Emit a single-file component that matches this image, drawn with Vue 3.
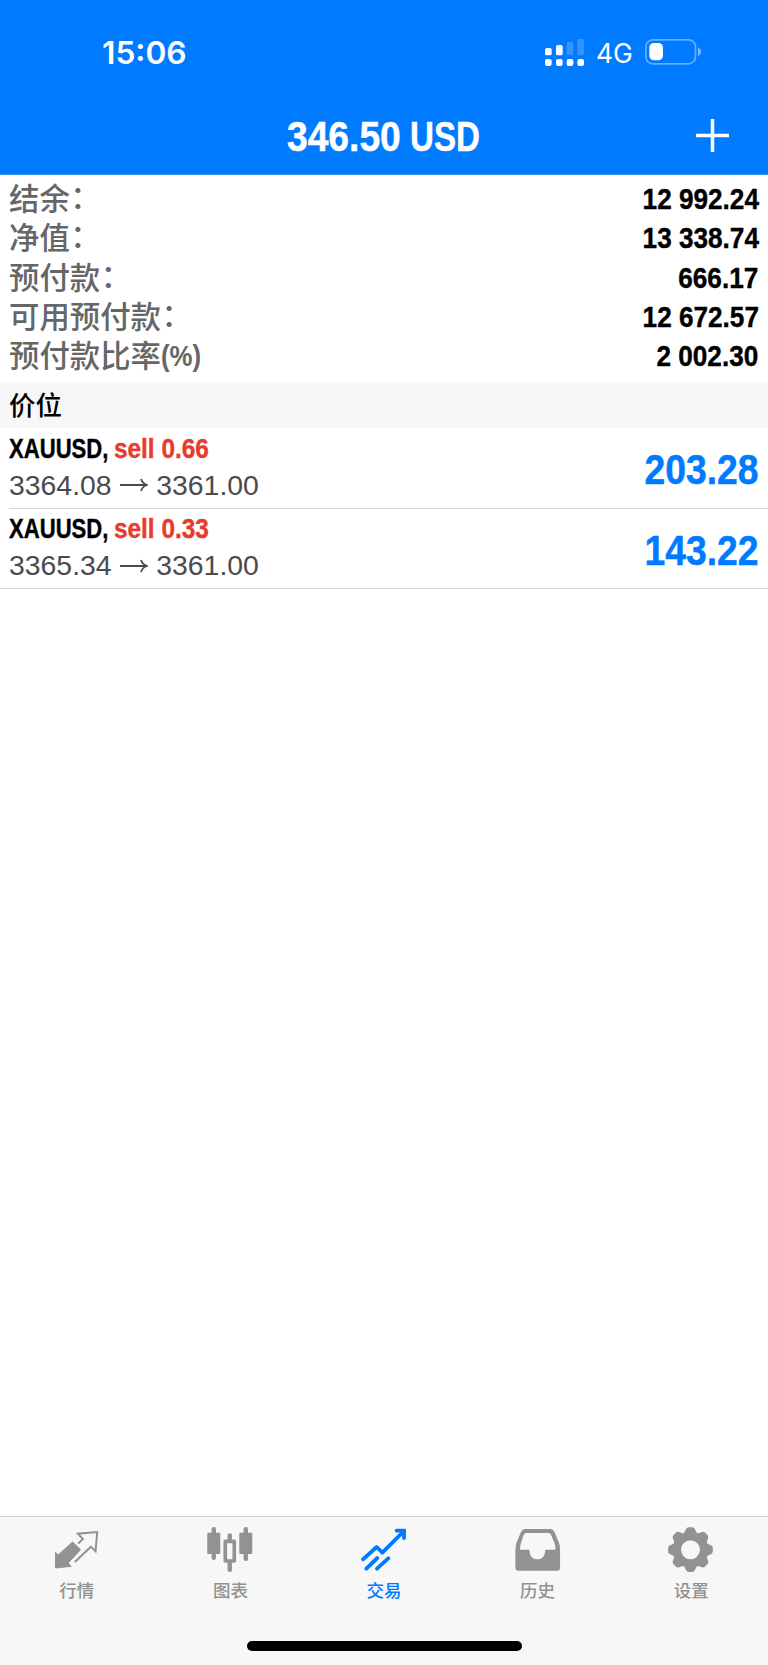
<script setup>
const account = [
  { label: '结余', suffix: '：', value: '12 992.24' },
  { label: '净值', suffix: '：', value: '13 338.74' },
  { label: '预付款', suffix: '：', value: '666.17' },
  { label: '可用预付款', suffix: '：', value: '12 672.57' },
  { label: '预付款比率', suffix: '(%)', value: '2 002.30' },
]
const positions = [
  { symbol: 'XAUUSD,', side: 'sell 0.66', open: '3364.08', now: '3361.00', profit: '203.28' },
  { symbol: 'XAUUSD,', side: 'sell 0.33', open: '3365.34', now: '3361.00', profit: '143.22' },
]
const teeth = [0, 45, 90, 135, 180, 225, 270, 315]
</script>

<template>
  <div class="screen">
    <header class="header">
      <div class="status">
        <span class="time">15:06</span>
        <div class="status-right">
          <svg class="signal" viewBox="483 111 117 87">
            <g fill="#fff">
              <rect x="483" y="141" width="20" height="22" rx="5" />
              <rect x="516" y="132" width="20" height="31" rx="5" />
              <rect x="483" y="174" width="20" height="21" rx="6" />
              <rect x="516" y="174" width="20" height="21" rx="6" />
              <rect x="548" y="174" width="20" height="21" rx="6" />
              <rect x="580" y="174" width="20" height="21" rx="6" />
            </g>
            <g fill="#fff" opacity=".2">
              <rect x="548" y="123" width="20" height="40" rx="5" />
              <rect x="580" y="114" width="20" height="49" rx="5" />
            </g>
          </svg>
          <span class="network">4G</span>
          <svg class="battery" viewBox="783 114 171 84">
            <rect x="785.5" y="119.5" width="149" height="72" rx="21" fill="none" stroke="#fff" stroke-opacity=".4" stroke-width="5" />
            <rect x="796" y="129" width="41" height="52" rx="14" fill="#fff" />
            <path d="M942 143 C954 147 954 163 942 168 Z" fill="#fff" opacity=".5" />
          </svg>
        </div>
      </div>
      <div class="nav">
        <h1 class="title"><span class="amount">346.50</span> <span class="currency">USD</span></h1>
        <svg class="plus" viewBox="0 0 33 33"><path d="M0 16.5H33M16.5 0V33" stroke="#fff" stroke-width="3.5" /></svg>
      </div>
    </header>

    <section class="account">
      <div v-for="row in account" :key="row.label" class="account-row">
        <span class="label">{{ row.label }}<span :class="row.suffix === '：' ? 'colon' : 'suffix'">{{ row.suffix }}</span></span>
        <span class="value">{{ row.value }}</span>
      </div>
    </section>

    <h2 class="section-title">价位</h2>

    <main class="positions">
      <article v-for="p in positions" :key="p.open" class="position">
        <div class="details">
          <div class="heading"><span class="symbol">{{ p.symbol }}</span> <span class="side">{{ p.side }}</span></div>
          <div class="prices">
            <span>{{ p.open }}</span>
            <svg class="arrow" viewBox="0 0 28 14"><path d="M0 7H27M21 1Q22.5 5.500 27 7Q22.5 8.500 21 13" fill="none" stroke="#4b4a50" stroke-width="1.800" /></svg>
            <span>{{ p.now }}</span>
          </div>
        </div>
        <span class="profit">{{ p.profit }}</span>
      </article>
    </main>

    <footer class="footer">
      <nav class="tabs">
        <div class="tab">
          <svg class="icon" viewBox="158.4 63 144 144">
            <path d="M166 189V142L174 150L217 111L241 134L204 174L213 184Z" fill="#929292" stroke="#929292" stroke-width="3" stroke-linejoin="round" />
            <path d="M234 116L248 102L233 86L291 81L286 139L272 125L224 171" fill="none" stroke="#929292" stroke-width="6" />
          </svg>
          <span>行情</span>
        </div>
        <div class="tab">
          <svg class="icon" viewBox="619.2 63 144 144" fill="#929292">
            <rect x="623" y="83" width="39" height="64" rx="3" />
            <rect x="636" y="66" width="13" height="99" rx="6" />
            <rect x="719" y="83" width="39" height="64" rx="3" />
            <rect x="732" y="66" width="13" height="102" rx="6" />
            <rect x="684" y="85" width="13" height="25" rx="6" />
            <rect x="684" y="165" width="13" height="36" rx="6" />
            <rect x="677" y="109" width="27" height="59" fill="none" stroke="#929292" stroke-width="11" stroke-linejoin="round" />
          </svg>
          <span>图表</span>
        </div>
        <div class="tab active">
          <svg class="icon" viewBox="180 63 144 144" fill="none" stroke="#007aff" stroke-width="11.500" stroke-linecap="round" stroke-linejoin="round">
            <path d="M189 163L230 126L247 143L312 78" />
            <path d="M290 77H312V99" stroke-linejoin="miter" />
            <path d="M199 191L232 159M231 191L265 160" />
          </svg>
          <span>交易</span>
        </div>
        <div class="tab">
          <svg class="icon" viewBox="640.8 63 144 144">
            <path d="M674 72H750Q759 72 762 80L776 114Q779 123 779 134V188Q779 197 770 197H654Q645 197 645 188V134Q645 123 648 114L662 80Q665 72 674 72ZM678 84Q672 84 670 89L661 116Q659 124 659 134H687C688 154 696 163 711 163S733 154 735 134H765Q765 124 763 116L752 89Q750 84 744 84Z" fill="#929292" fill-rule="evenodd" />
          </svg>
          <span>历史</span>
        </div>
        <div class="tab">
          <svg class="icon" viewBox="201.6 63 144 144">
            <g transform="translate(272 134)">
              <path v-for="a in teeth" :key="a" :transform="`rotate(${a})`" d="M-21 -48Q-17 -52 -15 -58Q-12 -67 -6 -67H6Q12 -67 15 -58Q17 -52 21 -48L15 -36H-15Z" fill="#929292" />
              <circle r="40.5" fill="none" stroke="#929292" stroke-width="24" />
            </g>
          </svg>
          <span>设置</span>
        </div>
      </nav>
      <div class="home-indicator"></div>
    </footer>
  </div>
</template>

<style>
body { margin: 0; background: #fff; }
</style>

<style scoped>
.screen {
  display: flex;
  flex-direction: column;
  width: 768px;
  height: 1665px;
  overflow: hidden;
  background: #fff;
  font-family: "Liberation Sans", "Noto Sans CJK SC", sans-serif;
}
.header {
  height: 175px;
  box-sizing: border-box;
  flex: none;
  background: #007aff;
  border-bottom: 1px solid #3a92ed;
  color: #fff;
}
.status {
  display: flex;
  justify-content: space-between;
  align-items: center;
  height: 104px;
  padding: 0 66px 0 102px;
  box-sizing: border-box;
}
.time {
  margin-top: 2px;
  font: 600 31.700px/40px Inter, sans-serif;
}
.status-right { display: flex; align-items: center; }
.signal { width: 39px; height: 29px; }
.network {
  width: 35px;
  margin: 2px 14px 0 12px;
  font: 400 26.500px/32px Inter, sans-serif;
  white-space: nowrap;
}
.battery { width: 57px; height: 28px; }
.nav {
  display: grid;
  grid-template-columns: 1fr auto 1fr;
  align-items: center;
  height: 62px;
  padding-right: 39px;
  padding-left: 39px;
}
.title {
  grid-column: 2;
  display: flex;
  gap: 8px;
  margin: 1px 0 0;
  font-size: 43px;
  line-height: 62px;
  font-weight: 700;
  white-space: nowrap;
  -webkit-text-stroke: .5px currentColor;
}
.amount, .currency {
  display: block;
  transform-origin: left;
}
.amount { width: 115px; transform: scaleX(.865); }
.currency { width: 71px; transform: scaleX(.77); }
.plus { width: 33px; height: 33px; justify-self: end; margin-bottom: 1px; }
.account {
  flex: none;
  height: 207px;
  box-sizing: border-box;
  padding: 4px 9px 0;
}
.account-row {
  display: flex;
  justify-content: space-between;
  height: 39.350px;
  line-height: 39.350px;
}
.label {
  margin-top: -1px;
  font-family: "Noto Sans CJK SC", sans-serif;
  font-weight: 500;
  font-size: 30.400px;
  color: #666;
}
.colon {
  display: inline-block;
  transform: translate(.500px, -2px);
}
.suffix {
  display: inline-block;
  font-family: "Liberation Sans", sans-serif;
  font-weight: 700;
  font-size: 30px;
  transform: translateY(-1px) scaleX(.86);
  transform-origin: left;
}
.value {
  font-weight: 700;
  font-size: 30px;
  transform: translate(-.500px, -.500px) scaleX(.872);
  transform-origin: right;
  -webkit-text-stroke: .4px currentColor;
  color: #000;
}
.section-title {
  flex: none;
  margin: 0;
  height: 46px;
  padding: 0 9px;
  background: #f7f7f7;
  font: 500 26.500px/44px "Noto Sans CJK SC", sans-serif;
}
.positions { flex: 1; }
.position {
  display: flex;
  justify-content: space-between;
  align-items: center;
  height: 80.600px;
  box-sizing: border-box;
  margin-left: 9px;
  padding-right: 9px;
  border-bottom: 1px solid #d9d9db;
}
.position:last-child { margin-left: 0; padding-left: 9px; }
.details { margin-top: -3px; }
.heading {
  display: flex;
  font-weight: 700;
  font-size: 28.500px;
  line-height: 38px;
  white-space: nowrap;
  -webkit-text-stroke: .4px currentColor;
}
.symbol, .side {
  display: block;
  transform-origin: left;
}
.symbol { width: 105px; transform: scaleX(.775); }
.side { transform: scaleX(.855); color: #e93a2b; }
.prices {
  display: flex;
  align-items: center;
  font-size: 28.400px;
  line-height: 37px;
  color: #4b4a50;
}
.arrow { width: 28px; height: 14px; margin: 0 8.300px; }
.profit {
  margin-top: 3px;
  font-weight: 700;
  font-size: 43px;
  line-height: 50px;
  color: #007aff;
  transform: scaleX(.867);
  transform-origin: right;
  -webkit-text-stroke: .5px currentColor;
}
.footer {
  flex: none;
  height: 149px;
  box-sizing: border-box;
  border-top: 1px solid #d4d4d4;
  background: #f7f7f7;
}
.tabs {
  display: grid;
  grid-template-columns: repeat(5, 1fr);
  height: 124px;
}
.tab {
  display: flex;
  flex-direction: column;
  align-items: center;
  padding-top: 9px;
  font: 500 17.500px/24px "Noto Sans CJK SC", sans-serif;
  color: #929292;
}
.tab span { margin-top: 4px; }
.active { color: #007aff; }
.icon { width: 48px; height: 48px; flex: none; }
.home-indicator {
  width: 275px;
  height: 10px;
  margin: 0 auto;
  border-radius: 5px;
  background: #000;
}
</style>
